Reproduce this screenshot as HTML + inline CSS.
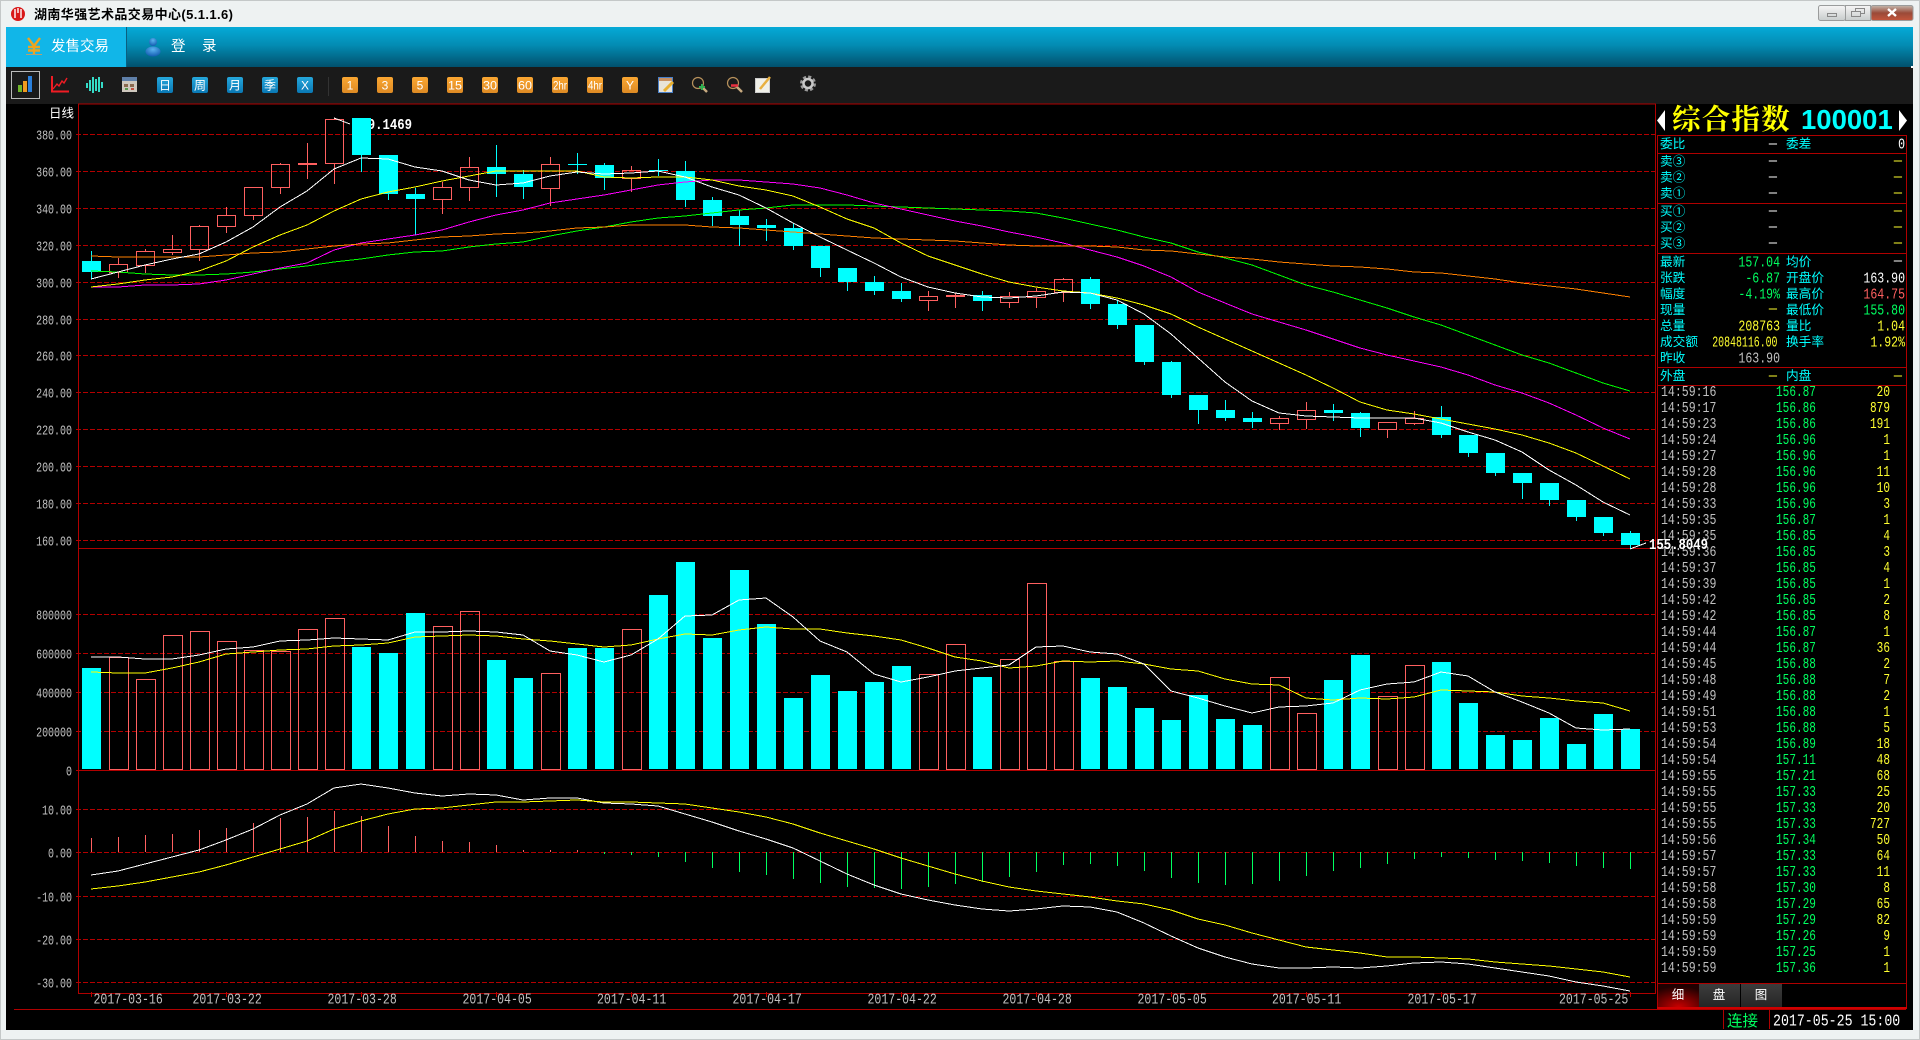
<!DOCTYPE html>
<html lang="zh"><head><meta charset="utf-8"><title>湖南华强艺术品交易中心</title>
<style>
html,body{margin:0;padding:0;background:#eef2f2;overflow:hidden}
svg{display:block}
.m{font-family:"Liberation Mono",monospace}
.c{font-family:"Liberation Sans","WenQuanYi Zen Hei","Noto Sans CJK SC",sans-serif}
</style></head><body>
<svg xmlns="http://www.w3.org/2000/svg" width="1920" height="1040" viewBox="0 0 1920 1040">
<defs>
<linearGradient id="tb" x1="0" y1="0" x2="0" y2="1"><stop offset="0" stop-color="#05aad7"/><stop offset=".45" stop-color="#038cb3"/><stop offset="1" stop-color="#01506d"/></linearGradient>
<linearGradient id="bb" x1="0" y1="0" x2="0" y2="1"><stop offset="0" stop-color="#25a7dc"/><stop offset="1" stop-color="#0a78b4"/></linearGradient>
<linearGradient id="ob" x1="0" y1="0" x2="0" y2="1"><stop offset="0" stop-color="#fba732"/><stop offset="1" stop-color="#de8a24"/></linearGradient>
<linearGradient id="wb" x1="0" y1="0" x2="0" y2="1"><stop offset="0" stop-color="#f6f6f6"/><stop offset="1" stop-color="#c8cccc"/></linearGradient>
<linearGradient id="cb" x1="0" y1="0" x2="0" y2="1"><stop offset="0" stop-color="#c4b8ae"/><stop offset=".5" stop-color="#9a4a38"/><stop offset="1" stop-color="#c4563c"/></linearGradient>
<linearGradient id="gt" x1="0" y1="0" x2="0" y2="1"><stop offset="0" stop-color="#3c3c3c"/><stop offset="1" stop-color="#262626"/></linearGradient>
<radialGradient id="rt" cx=".5" cy="1" r=".9"><stop offset="0" stop-color="#c80000"/><stop offset="1" stop-color="#200000"/></radialGradient>
<radialGradient id="ub" cx=".5" cy=".3" r=".8"><stop offset="0" stop-color="#5ab4f0"/><stop offset="1" stop-color="#0a4fa8"/></radialGradient>
</defs>

<!-- window chrome -->
<rect width="1920" height="1040" fill="#eef2f2"/>
<rect x=".5" y=".5" width="1919" height="1039" fill="none" stroke="#c4c8c8"/>
<circle cx="18" cy="14" r="7" fill="#d81818"/>
<path d="M15 9v9M18 8v5M21 9v9" stroke="#fff" stroke-width="1.4" fill="none"/>
<text class="c" x="34" y="19" font-size="13" font-weight="bold" letter-spacing=".4" fill="#000">湖南华强艺术品交易中心(5.1.1.6)</text>

<g stroke="#9a9c9c">
<rect x="1818.5" y="5.5" width="27" height="15" rx="2" fill="url(#wb)"/>
<rect x="1845.5" y="5.5" width="25" height="15" fill="url(#wb)"/>
<rect x="1871" y="5.5" width="42" height="15" rx="2" fill="url(#cb)"/>
</g>
<rect x="1827.5" y="13.5" width="9" height="3" fill="none" stroke="#888"/>
<path d="M1851.5 11.5h9v5h-9zM1855.5 11.5v-3h9v5h-4" fill="none" stroke="#888"/>
<path d="M1888 9l8 7M1896 9l-8 7" stroke="#fff" stroke-width="2.4" fill="none"/>

<!-- tab bar -->
<rect x="6" y="27" width="1907" height="40" fill="url(#tb)"/>
<rect x="6" y="27" width="120" height="40" fill="#11b6e8"/>
<rect x="126" y="27" width="1" height="40" fill="#0a5f80"/>
<path d="M28 38l6 8 6-8M34 46v8M28 47h12M28 50.5h12" stroke="#eba520" stroke-width="2.4" fill="none"/>
<rect x="26" y="54" width="16" height="1" fill="#b5a070"/>
<text class="c" x="51" y="51" font-size="14.5" fill="#fff">发售交易</text>
<circle cx="153" cy="42" r="4" fill="url(#ub)"/>
<ellipse cx="153" cy="51.5" rx="7.5" ry="5" fill="url(#ub)"/>
<text class="c" x="171" y="51" font-size="14.5" fill="#fff">登</text>
<text class="c" x="202" y="51" font-size="14.5" fill="#fff">录</text>

<!-- toolbar -->
<rect x="6" y="67" width="1907" height="37" fill="#1a1a1a"/>
<rect x="11.5" y="71.5" width="28" height="27" fill="none" stroke="#bbb"/>
<rect x="18" y="85" width="4" height="7" fill="#6fb52a"/><rect x="23" y="81" width="4" height="11" fill="#f09a20"/><rect x="28" y="76" width="4" height="16" fill="#2a80dc"/>
<path d="M52 76V91.5H69" stroke="#f01c24" stroke-width="2" fill="none"/>
<path d="M53 89l4-5 2 2 3-5 2 2 3-5" stroke="#f01c24" stroke-width="1.4" fill="none"/>
<path d="M87 83v5M90 80v11M93 77v16M96 79v12M99 77v15M102 82v6" stroke="#35dcc8" stroke-width="2" fill="none"/>
<rect x="122" y="77" width="15" height="15" fill="#cfc8be"/><rect x="122" y="77" width="15" height="4" fill="#5f7fa8"/>
<path d="M124 84h4v3h-4zM130 84h4v3h-4z" fill="#8a6a50"/><rect x="125" y="88" width="3" height="2" fill="#5a9a50"/><rect x="131" y="88" width="3" height="2" fill="#c05040"/>
<g fill="url(#bb)"><rect x="157" y="77" width="16" height="16" rx="2"/><rect x="192" y="77" width="16" height="16" rx="2"/><rect x="227" y="77" width="16" height="16" rx="2"/><rect x="262" y="77" width="16" height="16" rx="2"/><rect x="297" y="77" width="16" height="16" rx="2"/></g>
<g class="c" font-size="12" fill="#fff" text-anchor="middle"><text x="165" y="89.5">日</text><text x="200" y="89.5">周</text><text x="235" y="89.5">月</text><text x="270" y="89.5">季</text><text x="305" y="89.5">X</text></g>
<rect x="328" y="77" width="1" height="19" fill="#333"/>
<g fill="url(#ob)"><rect x="342" y="77" width="16" height="16" rx="2"/><rect x="377" y="77" width="16" height="16" rx="2"/><rect x="412" y="77" width="16" height="16" rx="2"/><rect x="447" y="77" width="16" height="16" rx="2"/><rect x="482" y="77" width="16" height="16" rx="2"/><rect x="517" y="77" width="16" height="16" rx="2"/><rect x="552" y="77" width="16" height="16" rx="2"/><rect x="587" y="77" width="16" height="16" rx="2"/><rect x="622" y="77" width="16" height="16" rx="2"/></g>
<g font-family="Liberation Sans" font-size="12" fill="#fff" text-anchor="middle"><text x="350" y="89.5">1</text><text x="385" y="89.5">3</text><text x="420" y="89.5">5</text><text x="455" y="89.5" textLength="14" lengthAdjust="spacingAndGlyphs">15</text><text x="490" y="89.5" textLength="14" lengthAdjust="spacingAndGlyphs">30</text><text x="525" y="89.5" textLength="14" lengthAdjust="spacingAndGlyphs">60</text><text x="560" y="89.5" textLength="14" lengthAdjust="spacingAndGlyphs">2hr</text><text x="595" y="89.5" textLength="14" lengthAdjust="spacingAndGlyphs">4hr</text><text x="630" y="89.5">Y</text></g>
<rect x="658.5" y="77.5" width="14" height="15" fill="#e8e4d8" stroke="#4a80c8"/><rect x="659" y="78" width="13" height="3" fill="#c89060"/>
<path d="M664 91l9-9" stroke="#e8b030" stroke-width="3"/>
<circle cx="698" cy="83" r="5.5" fill="none" stroke="#b8925c" stroke-width="1.2"/><path d="M702 87l5 5" stroke="#c8aa80" stroke-width="2.5"/><path d="M699 87h6M702 84v6" stroke="#30b050" stroke-width="2"/>
<circle cx="733" cy="83" r="5.5" fill="none" stroke="#b8925c" stroke-width="1.2"/><path d="M737 87l5 5" stroke="#c8aa80" stroke-width="2.5"/><path d="M731 85.5h7" stroke="#e83040" stroke-width="2.5"/>
<rect x="755.5" y="78.5" width="14" height="14" fill="#f0f0e8" stroke="#ccc"/><path d="M760 89l10-12" stroke="#e8b040" stroke-width="2.5"/>
<circle cx="808" cy="83.5" r="6.5" fill="none" stroke="#9a9a9a" stroke-width="3" stroke-dasharray="3 2.1"/><circle cx="808" cy="83.5" r="4.5" fill="none" stroke="#c8c8c8" stroke-width="2.5"/>
<rect x="1911" y="66" width="2" height="2" fill="#fff"/>

<!-- main black -->
<rect x="6" y="104" width="1907" height="926" fill="#000"/>

<!-- grids -->
<path d="M76 134.5H1655M76 171.5H1655M76 208.5H1655M76 245.5H1655M76 282.5H1655M76 319.5H1655M76 355.5H1655M76 392.5H1655M76 429.5H1655M76 466.5H1655M76 503.5H1655M76 540.5H1655M76 614.5H1655M76 653.5H1655M76 692.5H1655M76 731.5H1655M76 809.5H1655M76 852.5H1655M76 896.5H1655M76 939.5H1655M76 982.5H1655" stroke="#b40000" stroke-dasharray="5 2" fill="none"/>
<!-- frame -->
<path d="M78.5 104V993.5H1655.5V104ZM78 548.5H1655.5M76 770.5H1655.5M14 1009.5H1906" stroke="#b00000" fill="none"/>
<path d="M91.5 992V997M226.5 992V997M361.5 992V997M496.5 992V997M631.5 992V997M766.5 992V997M901.5 992V997M1036.5 992V997M1171.5 992V997M1306.5 992V997M1441.5 992V997M1630.5 992V997" stroke="#c00000" fill="none"/>

<!-- high label behind candles -->
<text class="m" transform="translate(353,129) scale(.82,1)" font-size="15" font-weight="bold" fill="#fff">389.1469</text>

<!-- axis labels -->
<g class="m" transform="translate(72,0) scale(.74,1)" text-anchor="end" font-size="13.5" fill="#c0c0c0">
<text y="139.5">380.00</text><text y="176.5">360.00</text><text y="213.5">340.00</text><text y="250.5">320.00</text><text y="287.5">300.00</text><text y="324.5">280.00</text><text y="360.5">260.00</text><text y="397.5">240.00</text><text y="434.5">220.00</text><text y="471.5">200.00</text><text y="508.5">180.00</text><text y="545.5">160.00</text>
<text y="619.5">800000</text><text y="658.5">600000</text><text y="697.5">400000</text><text y="736.5">200000</text><text y="775.5">0</text>
<text y="814.5">10.00</text><text y="857.5">0.00</text><text y="901.5">-10.00</text><text y="944.5">-20.00</text><text y="987.5">-30.00</text>
</g>
<text class="c" x="49" y="117.5" font-size="12.5" fill="#fff">日线</text>

<!-- date labels -->
<g class="m" font-size="15" fill="#c0c0c0">
<text transform="translate(93.5,1003.5) scale(.77,1)">2017-03-16</text><text transform="translate(192.5,1003.5) scale(.77,1)">2017-03-22</text><text transform="translate(327.5,1003.5) scale(.77,1)">2017-03-28</text><text transform="translate(462.5,1003.5) scale(.77,1)">2017-04-05</text><text transform="translate(597,1003.5) scale(.77,1)">2017-04-11</text><text transform="translate(732.5,1003.5) scale(.77,1)">2017-04-17</text><text transform="translate(867.5,1003.5) scale(.77,1)">2017-04-22</text><text transform="translate(1002.5,1003.5) scale(.77,1)">2017-04-28</text><text transform="translate(1137.5,1003.5) scale(.77,1)">2017-05-05</text><text transform="translate(1272,1003.5) scale(.77,1)">2017-05-11</text><text transform="translate(1407.5,1003.5) scale(.77,1)">2017-05-17</text><text transform="translate(1559,1003.5) scale(.77,1)">2017-05-25</text>
</g>

<!-- candles -->
<path shape-rendering="crispEdges" stroke="#00ffff" fill="none" d="M91.5 251V279M361.5 119V172M388.5 155V200M415.5 188V235M496.5 145V197M523.5 170V199M577.5 153V174M604.5 163V190M658.5 159V176M685.5 161V207M712.5 197V226M739.5 210V246M766.5 219V241M793.5 223V250M820.5 246V277M847.5 268V291M874.5 276V295M901.5 283V302M982.5 291V311M1090.5 277V309M1117.5 300V329M1144.5 325V365M1171.5 361V398M1198.5 395V424M1225.5 400V421M1252.5 412V428M1333.5 404V421M1360.5 412V437M1441.5 406V438M1468.5 435V457M1495.5 453V476M1522.5 473V499M1549.5 483V506M1576.5 500V521M1603.5 517V536M1630.5 531V549M577 164.5h1"/>
<path shape-rendering="crispEdges" fill="#00ffff" d="M82 261h19v11h-19zM352 118h19v37h-19zM379 155h19v39h-19zM406 194h19v5h-19zM487 167h19v7h-19zM514 174h19v13h-19zM568 164h19v1h-19zM595 165h19v13h-19zM649 170h19v1h-19zM676 171h19v29h-19zM703 200h19v16h-19zM730 216h19v9h-19zM757 225h19v3h-19zM784 228h19v18h-19zM811 246h19v22h-19zM838 268h19v14h-19zM865 282h19v9h-19zM892 291h19v8h-19zM973 295h19v6h-19zM1081 279h19v25h-19zM1108 304h19v21h-19zM1135 325h19v37h-19zM1162 362h19v33h-19zM1189 395h19v15h-19zM1216 410h19v8h-19zM1243 418h19v4h-19zM1324 410h19v3h-19zM1351 413h19v15h-19zM1432 417h19v18h-19zM1459 435h19v18h-19zM1486 453h19v20h-19zM1513 473h19v10h-19zM1540 483h19v17h-19zM1567 500h19v17h-19zM1594 517h19v16h-19zM1621 533h19v12h-19z"/>
<path shape-rendering="crispEdges" stroke="#ff6060" fill="none" d="M118.5 258V264M118.5 272V278M145.5 249V251M145.5 265V273M172.5 235V249M172.5 252V255M199.5 225V226M199.5 249V261M226.5 207V215M226.5 226V233M253.5 215V220M280.5 163V164M280.5 187V194M307.5 143V163M307.5 165V179M334.5 118V119M334.5 163V184M442.5 182V187M442.5 199V214M469.5 157V167M469.5 187V201M550.5 157V164M550.5 188V206M631.5 166V170M631.5 178V192M928.5 291V296M928.5 300V311M955.5 293V295M955.5 297V308M1009.5 292V296M1009.5 302V308M1036.5 288V291M1036.5 297V308M1063.5 278V279M1063.5 292V302M1279.5 416V418M1279.5 423V430M1306.5 402V410M1306.5 419V429M1387.5 429V438M1414.5 411V418M1414.5 423V425
M109.5 264.5h18v8h-18zM136.5 251.5h18v14h-18zM163.5 249.5h18v3h-18zM190.5 226.5h18v23h-18zM217.5 215.5h18v11h-18zM244.5 187.5h18v28h-18zM271.5 164.5h18v23h-18zM298.5 163.5h18v1h-18zM325.5 119.5h18v44h-18zM433.5 187.5h18v12h-18zM460.5 167.5h18v20h-18zM541.5 164.5h18v24h-18zM622.5 170.5h18v8h-18zM919.5 296.5h18v4h-18zM946.5 295.5h18v1h-18zM1000.5 296.5h18v6h-18zM1027.5 291.5h18v6h-18zM1054.5 279.5h18v13h-18zM1270.5 418.5h18v5h-18zM1297.5 410.5h18v9h-18zM1378.5 422.5h18v7h-18zM1405.5 418.5h18v5h-18z"/>

<!-- MA lines main -->
<g fill="none" shape-rendering="crispEdges">
<polyline stroke="#00ff00" points="91,271 118,272 145,274 172,275 199,275 226,274 253,272 280,269 307,266 334,262 361,259 388,255 415,252 442,251 469,247 496,244 523,242 550,236 577,231 604,227 631,222 658,218 685,216 712,213 739,210 766,208 793,205 820,205 847,205 874,206 901,207 928,208 955,209 982,210 1009,211 1036,213 1063,218 1090,224 1117,230 1144,237 1171,243 1198,252 1225,258 1252,265 1279,275 1306,285 1333,292 1360,300 1387,308 1414,317 1441,325 1468,335 1495,345 1522,355 1549,363 1576,373 1603,383 1630,391"/>
<polyline stroke="#ff00ff" points="91,287 118,287 145,285 172,285 199,284 226,280 253,274 280,268 307,263 334,250 361,243 388,239 415,235 442,230 469,222 496,215 523,210 550,203 577,199 604,195 631,190 658,185 685,182 712,180 739,180 766,182 793,184 820,188 847,195 874,203 901,209 928,215 955,221 982,226 1009,232 1036,237 1063,243 1090,250 1117,257 1144,266 1171,277 1198,292 1225,303 1252,314 1279,322 1306,330 1333,339 1360,348 1387,355 1414,361 1441,367 1468,375 1495,385 1522,393 1549,403 1576,415 1603,428 1630,439"/>
<polyline stroke="#ff8000" points="91,256 118,257 145,257 172,257 199,257 226,255 253,253 280,252 307,249 334,246 361,244 388,243 415,240 442,237 469,236 496,234 523,233 550,231 577,228 604,227 631,225 658,225 685,225 712,227 739,228 766,230 793,232 820,234 847,236 874,238 901,239 928,240 955,241 982,243 1009,245 1036,246 1063,246 1090,246 1117,247 1144,250 1171,251 1198,254 1225,257 1252,259 1279,262 1306,264 1333,266 1360,267 1387,269 1414,272 1441,273 1468,276 1495,279 1522,283 1549,286 1576,289 1603,293 1630,297"/>
<polyline stroke="#ffff00" points="91,287 118,284 145,280 172,277 199,271 226,261 253,247 280,235 307,225 334,211 361,199 388,192 415,187 442,181 469,176 496,171 523,171 550,171 577,171 604,177 631,178 658,177 685,177 712,180 739,186 766,190 793,196 820,207 847,219 874,228 901,243 928,256 955,265 982,274 1009,282 1036,287 1063,291 1090,293 1117,298 1144,305 1171,314 1198,327 1225,339 1252,351 1279,363 1306,375 1333,388 1360,402 1387,410 1414,414 1441,419 1468,424 1495,429 1522,435 1549,443 1576,453 1603,466 1630,479"/>
<polyline stroke="#ffffff" points="91,279 118,272 145,265 172,259 199,254 226,242 253,227 280,207 307,191 334,169 361,158 388,159 415,167 442,171 469,180 496,185 523,183 550,176 577,172 604,174 631,173 658,171 685,177 712,187 739,195 766,208 793,223 820,237 847,250 874,263 901,277 928,287 955,293 982,297 1009,298 1036,296 1063,292 1090,293 1117,300 1144,314 1171,334 1198,358 1225,382 1252,401 1279,413 1306,416 1333,417 1360,418 1387,418 1414,418 1441,423 1468,432 1495,440 1522,452 1549,470 1576,485 1603,502 1630,515"/>
<path stroke="#ffffff" d="M334 118L350 124M1630 549L1646 543"/>
</g>

<!-- volume bars -->
<path shape-rendering="crispEdges" fill="#00ffff" d="M82 668h19V769h-19zM352 647h19V769h-19zM379 653h19V769h-19zM406 613h19V769h-19zM487 660h19V769h-19zM514 678h19V769h-19zM568 648h19V769h-19zM595 648h19V769h-19zM649 595h19V769h-19zM676 562h19V769h-19zM703 638h19V769h-19zM730 570h19V769h-19zM757 624h19V769h-19zM784 698h19V769h-19zM811 675h19V769h-19zM838 691h19V769h-19zM865 682h19V769h-19zM892 666h19V769h-19zM973 677h19V769h-19zM1081 678h19V769h-19zM1108 687h19V769h-19zM1135 708h19V769h-19zM1162 720h19V769h-19zM1189 695h19V769h-19zM1216 719h19V769h-19zM1243 725h19V769h-19zM1324 680h19V769h-19zM1351 655h19V769h-19zM1432 662h19V769h-19zM1459 703h19V769h-19zM1486 735h19V769h-19zM1513 740h19V769h-19zM1540 718h19V769h-19zM1567 744h19V769h-19zM1594 714h19V769h-19zM1621 729h19V769h-19z"/>
<path shape-rendering="crispEdges" fill="none" stroke="#ff6060" d="M109.5 657.5h19V769.5h-19zM136.5 679.5h19V769.5h-19zM163.5 635.5h19V769.5h-19zM190.5 631.5h19V769.5h-19zM217.5 641.5h19V769.5h-19zM244.5 650.5h19V769.5h-19zM271.5 651.5h19V769.5h-19zM298.5 629.5h19V769.5h-19zM325.5 618.5h19V769.5h-19zM433.5 626.5h19V769.5h-19zM460.5 611.5h19V769.5h-19zM541.5 673.5h19V769.5h-19zM622.5 629.5h19V769.5h-19zM919.5 674.5h19V769.5h-19zM946.5 644.5h19V769.5h-19zM1000.5 659.5h19V769.5h-19zM1027.5 583.5h19V769.5h-19zM1054.5 661.5h19V769.5h-19zM1270.5 677.5h19V769.5h-19zM1297.5 713.5h19V769.5h-19zM1378.5 696.5h19V769.5h-19zM1405.5 665.5h19V769.5h-19z"/>
<g fill="none" shape-rendering="crispEdges">
<polyline stroke="#ffff00" points="91,672 118,673 145,673 172,668 199,662 226,654 253,652 280,650 307,649 334,646 361,645 388,643 415,637 442,636 469,635 496,636 523,639 550,641 577,644 604,647 631,645 658,639 685,634 712,635 739,630 766,627 793,629 820,629 847,633 874,636 901,640 928,648 955,657 982,661 1009,668 1036,666 1063,661 1090,662 1117,661 1144,664 1171,669 1198,671 1225,679 1252,684 1279,685 1306,698 1333,700 1360,698 1387,699 1414,697 1441,690 1468,691 1495,692 1522,696 1549,698 1576,701 1603,703 1630,711"/>
<polyline stroke="#ffffff" points="91,657 118,657 145,659 172,659 199,655 226,649 253,647 280,641 307,640 334,638 361,639 388,640 415,632 442,632 469,631 496,632 523,635 550,651 577,655 604,662 631,655 658,639 685,616 712,615 739,600 766,598 793,617 820,641 847,652 874,674 901,682 928,677 955,671 982,668 1009,665 1036,647 1063,646 1090,652 1117,654 1144,664 1171,691 1198,698 1225,706 1252,713 1279,707 1306,706 1333,703 1360,690 1387,684 1414,682 1441,672 1468,676 1495,692 1522,702 1549,713 1576,728 1603,730 1630,729"/>
</g>

<!-- MACD histogram -->
<path shape-rendering="crispEdges" fill="none" stroke="#ff6060" d="M91.5 852V838M118.5 852V837M145.5 852V835M172.5 852V834M199.5 852V830M226.5 852V828M253.5 852V823M280.5 852V818M307.5 852V817M334.5 852V811M361.5 852V816M388.5 852V826M415.5 852V836M442.5 852V841M469.5 852V842M496.5 852V845M523.5 852V850M550.5 852V850M577.5 852V850"/>
<path shape-rendering="crispEdges" fill="none" stroke="#00ff60" d="M604.5 852V854M631.5 852V855M658.5 852V857M685.5 852V862M712.5 852V868M739.5 852V872M766.5 852V875M793.5 852V879M820.5 852V883M847.5 852V887M874.5 852V888M901.5 852V889M928.5 852V887M955.5 852V884M982.5 852V882M1009.5 852V877M1036.5 852V872M1063.5 852V865M1090.5 852V864M1117.5 852V866M1144.5 852V871M1171.5 852V878M1198.5 852V883M1225.5 852V885M1252.5 852V884M1279.5 852V881M1306.5 852V876M1333.5 852V871M1360.5 852V868M1387.5 852V864M1414.5 852V859M1441.5 852V857M1468.5 852V858M1495.5 852V860M1522.5 852V861M1549.5 852V863M1576.5 852V866M1603.5 852V868M1630.5 852V869"/>
<g fill="none" shape-rendering="crispEdges">
<polyline stroke="#ffffff" points="91,875 118,871 145,864 172,857 199,850 226,840 253,829 280,815 307,804 334,788 361,784 388,788 415,793 442,796 469,794 496,795 523,800 550,798 577,798 604,803 631,804 658,806 685,814 712,822 739,831 766,839 793,848 820,861 847,874 874,885 901,894 928,900 955,905 982,909 1009,911 1036,909 1063,906 1090,907 1117,912 1144,923 1171,936 1198,948 1225,957 1252,964 1279,968 1306,968 1333,967 1360,968 1387,966 1414,963 1441,962 1468,964 1495,968 1522,972 1549,976 1576,982 1603,986 1630,991"/>
<polyline stroke="#ffff00" points="91,889 118,886 145,882 172,877 199,872 226,865 253,857 280,849 307,841 334,829 361,821 388,814 415,809 442,808 469,805 496,802 523,802 550,801 577,800 604,802 631,802 658,803 685,804 712,808 739,812 766,817 793,824 820,833 847,841 874,849 901,858 928,866 955,874 982,881 1009,887 1036,891 1063,894 1090,897 1117,901 1144,904 1171,910 1198,919 1225,925 1252,933 1279,940 1306,947 1333,950 1360,953 1387,957 1414,957 1441,958 1468,959 1495,962 1522,964 1549,966 1576,969 1603,972 1630,977"/>
</g>

<!-- right panel frame -->
<path d="M1657.5 135.5H1906.5V1008.5H1657.5ZM1657.5 153.5H1906.5M1657.5 203.5H1906.5M1657.5 253.5H1906.5M1657.5 367.5H1906.5M1657.5 385.5H1906.5M1657.5 983.5H1906.5M1723.5 1009V1029M1769.5 1009V1029" fill="none" stroke="#b00000"/>
<rect x="1657" y="1007" width="250" height="2" fill="#d00000"/>

<!-- header -->
<path d="M1665 110V131L1657 120.5Z" fill="#fff"/>
<path d="M1899 110V131L1907 120.5Z" fill="#fff"/>
<text x="1672" y="129" font-family="Noto Serif CJK SC,serif" font-weight="bold" font-size="28.5" letter-spacing="1.2" fill="#ffff00">综合指数</text>
<text x="1801" y="129" font-family="Liberation Sans" font-weight="bold" font-size="27.5" fill="#00ffff">100001</text>

<!-- labels -->
<g class="c" font-size="12.7" fill="#00ffff">
<text x="1660" y="148">委比</text><text x="1786" y="148">委差</text>
<text x="1660" y="165.5">卖③</text><text x="1660" y="181.5">卖②</text><text x="1660" y="197.5">卖①</text>
<text x="1660" y="215.5">买①</text><text x="1660" y="231.5">买②</text><text x="1660" y="247.5">买③</text>
<text x="1660" y="266">最新</text><text x="1660" y="282">张跌</text><text x="1660" y="298">幅度</text><text x="1660" y="314">现量</text><text x="1660" y="330">总量</text><text x="1660" y="346">成交额</text><text x="1660" y="362">昨收</text>
<text x="1786" y="266">均价</text><text x="1786" y="282">开盘价</text><text x="1786" y="298">最高价</text><text x="1786" y="314">最低价</text><text x="1786" y="330">量比</text><text x="1786" y="346">换手率</text>
<text x="1660" y="380">外盘</text><text x="1786" y="380">内盘</text>
</g>
<!-- dashes -->
<g class="m" font-size="15" fill="#fff" text-anchor="end">
<text transform="translate(1777,148) scale(.9,1)">—</text>
<text transform="translate(1777,165) scale(.9,1)">—</text><text transform="translate(1777,181) scale(.9,1)">—</text><text transform="translate(1777,197) scale(.9,1)">—</text>
<text transform="translate(1777,215) scale(.9,1)">—</text><text transform="translate(1777,231) scale(.9,1)">—</text><text transform="translate(1777,247) scale(.9,1)">—</text>
<text transform="translate(1902,265) scale(.9,1)">—</text>
<g fill="#ffff30">
<text transform="translate(1902,165) scale(.9,1)">—</text><text transform="translate(1902,181) scale(.9,1)">—</text><text transform="translate(1902,197) scale(.9,1)">—</text>
<text transform="translate(1902,215) scale(.9,1)">—</text><text transform="translate(1902,231) scale(.9,1)">—</text><text transform="translate(1902,247) scale(.9,1)">—</text>
<text transform="translate(1777,313) scale(.9,1)">—</text><text transform="translate(1777,380) scale(.9,1)">—</text><text transform="translate(1902,380) scale(.9,1)">—</text>
</g>
</g>
<!-- values -->
<g class="m" font-size="15" text-anchor="end">
<text transform="translate(1905,148.5) scale(.77,1)" fill="#fff">0</text>
<g fill="#00ff60"><text transform="translate(1780,266.5) scale(.77,1)">157.04</text><text transform="translate(1780,282.5) scale(.77,1)">-6.87</text><text transform="translate(1780,298.5) scale(.77,1)">-4.19%</text><text transform="translate(1905,314.5) scale(.77,1)">155.80</text></g>
<text transform="translate(1905,282.5) scale(.77,1)" fill="#fff">163.90</text>
<text transform="translate(1905,298.5) scale(.77,1)" fill="#ff6060">164.75</text>
<g fill="#ffff30"><text transform="translate(1780,330.5) scale(.77,1)">208763</text><text transform="translate(1777.5,346.5) scale(.66,1)">20848116.00</text><text transform="translate(1905,330.5) scale(.77,1)">1.04</text><text transform="translate(1905,346.5) scale(.77,1)">1.92%</text></g>
<text transform="translate(1780,362.5) scale(.77,1)" fill="#c0c0c0">163.90</text>
</g>

<!-- tick rows -->
<g class="m" font-size="15" fill="#c0c0c0" transform="translate(1661,0) scale(.77,1)">
<text y="396">14:59:16</text><text y="412">14:59:17</text><text y="428">14:59:23</text><text y="444">14:59:24</text><text y="460">14:59:27</text><text y="476">14:59:28</text><text y="492">14:59:28</text><text y="508">14:59:33</text><text y="524">14:59:35</text><text y="540">14:59:35</text><text y="556">14:59:36</text><text y="572">14:59:37</text><text y="588">14:59:39</text><text y="604">14:59:42</text><text y="620">14:59:42</text><text y="636">14:59:44</text><text y="652">14:59:44</text><text y="668">14:59:45</text><text y="684">14:59:48</text><text y="700">14:59:49</text><text y="716">14:59:51</text><text y="732">14:59:53</text><text y="748">14:59:54</text><text y="764">14:59:54</text><text y="780">14:59:55</text><text y="796">14:59:55</text><text y="812">14:59:55</text><text y="828">14:59:55</text><text y="844">14:59:56</text><text y="860">14:59:57</text><text y="876">14:59:57</text><text y="892">14:59:58</text><text y="908">14:59:58</text><text y="924">14:59:59</text><text y="940">14:59:59</text><text y="956">14:59:59</text><text y="972">14:59:59</text>
</g>
<g class="m" font-size="15" fill="#00ff60" transform="translate(1776,0) scale(.74,1)">
<text y="396">156.87</text><text y="412">156.86</text><text y="428">156.86</text><text y="444">156.96</text><text y="460">156.96</text><text y="476">156.96</text><text y="492">156.96</text><text y="508">156.96</text><text y="524">156.87</text><text y="540">156.85</text><text y="556">156.85</text><text y="572">156.85</text><text y="588">156.85</text><text y="604">156.85</text><text y="620">156.85</text><text y="636">156.87</text><text y="652">156.87</text><text y="668">156.88</text><text y="684">156.88</text><text y="700">156.88</text><text y="716">156.88</text><text y="732">156.88</text><text y="748">156.89</text><text y="764">157.11</text><text y="780">157.21</text><text y="796">157.33</text><text y="812">157.33</text><text y="828">157.33</text><text y="844">157.34</text><text y="860">157.33</text><text y="876">157.33</text><text y="892">157.30</text><text y="908">157.29</text><text y="924">157.29</text><text y="940">157.26</text><text y="956">157.25</text><text y="972">157.36</text>
</g>
<g class="m" font-size="15" fill="#ffff30" text-anchor="end" transform="translate(1890,0) scale(.74,1)">
<text y="396">20</text><text y="412">879</text><text y="428">191</text><text y="444">1</text><text y="460">1</text><text y="476">11</text><text y="492">10</text><text y="508">3</text><text y="524">1</text><text y="540">4</text><text y="556">3</text><text y="572">4</text><text y="588">1</text><text y="604">2</text><text y="620">8</text><text y="636">1</text><text y="652">36</text><text y="668">2</text><text y="684">7</text><text y="700">2</text><text y="716">1</text><text y="732">5</text><text y="748">18</text><text y="764">48</text><text y="780">68</text><text y="796">25</text><text y="812">20</text><text y="828">727</text><text y="844">50</text><text y="860">64</text><text y="876">11</text><text y="892">8</text><text y="908">65</text><text y="924">82</text><text y="940">9</text><text y="956">1</text><text y="972">1</text>
</g>

<!-- low label on top -->
<text class="m" transform="translate(1649,549) scale(.82,1)" font-size="15" font-weight="bold" fill="#fff">155.8049</text>

<!-- bottom tabs -->
<rect x="1658" y="984" width="41" height="23" fill="url(#rt)"/>
<rect x="1699" y="984" width="41" height="23" fill="url(#gt)"/>
<rect x="1741" y="984" width="41" height="23" fill="url(#gt)"/>
<g class="c" font-size="12.5" fill="#fff" text-anchor="middle"><text x="1678" y="999">细</text><text x="1719" y="999">盘</text><text x="1761" y="999">图</text></g>

<!-- status -->
<text class="c" x="1727" y="1026" font-size="15.5" fill="#00ff60">连接</text>
<text class="m" transform="translate(1773,1025.5) scale(.78,1)" font-size="17" fill="#fff">2017-05-25 15:00</text>
</svg>
</body></html>
